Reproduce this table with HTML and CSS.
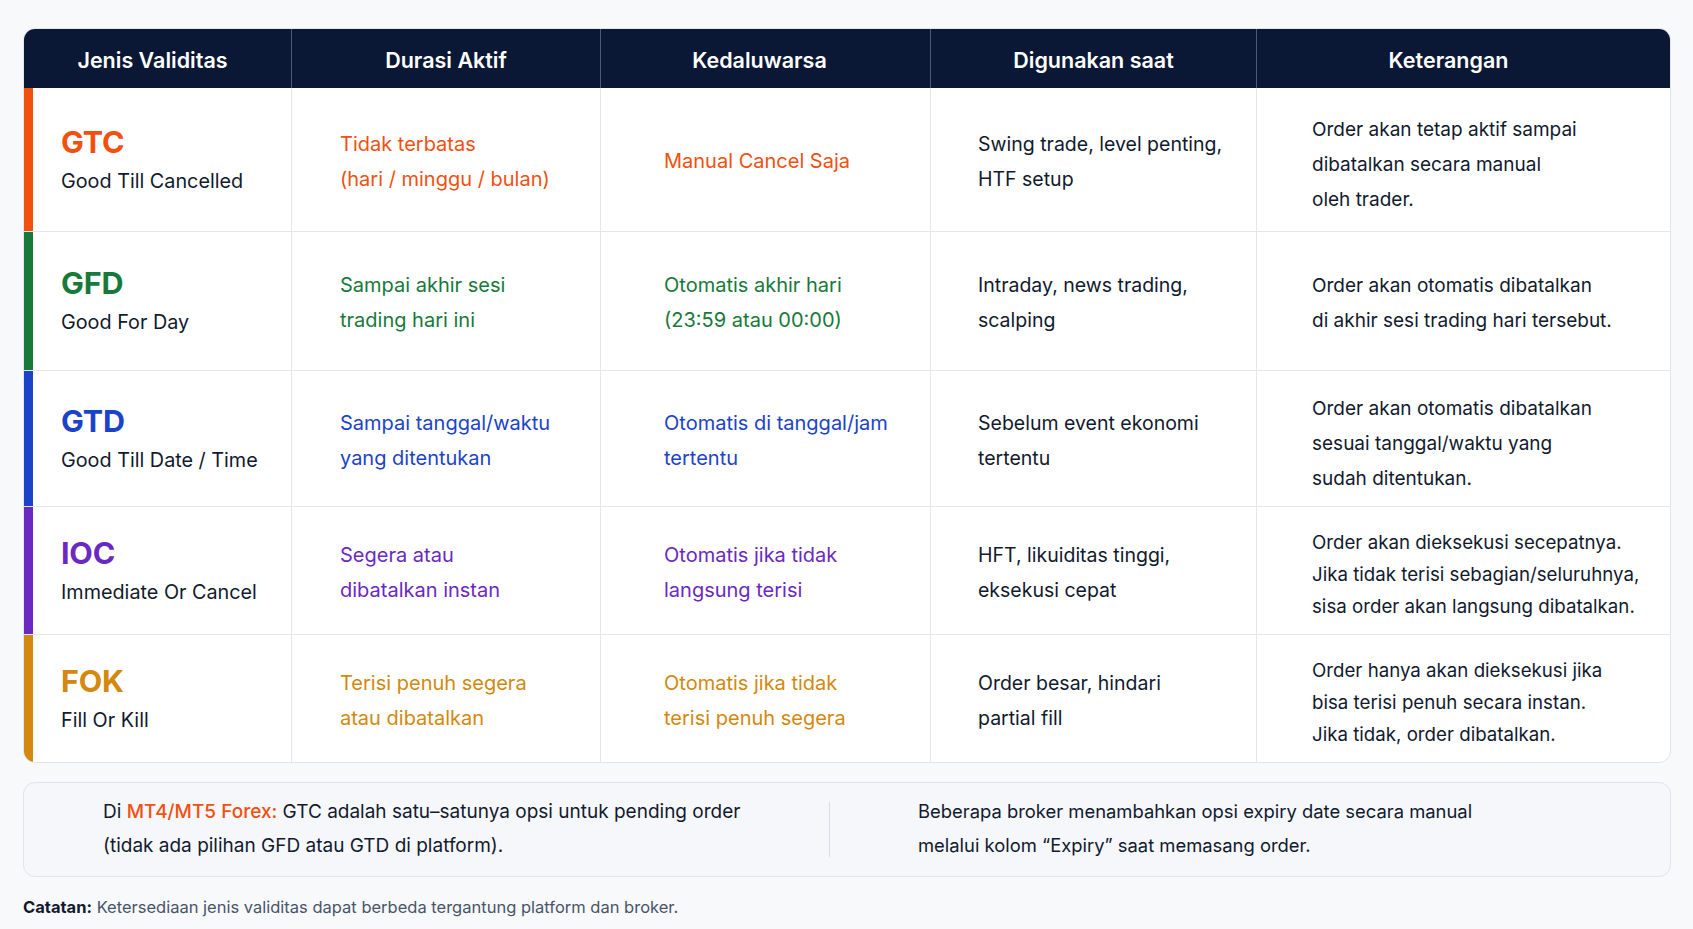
FILE: index.html
```html
<!DOCTYPE html>
<html lang="id">
<head>
<meta charset="utf-8">
<title>Jenis Validitas Order</title>
<link rel="stylesheet" href="styles.css">
</head>
<body>
<div class="page">
  <div class="table">
    <div class="row head">
      <div class="cell h1">Jenis Validitas</div>
      <div class="cell h2">Durasi Aktif</div>
      <div class="cell h3">Kedaluwarsa</div>
      <div class="cell h4">Digunakan saat</div>
      <div class="cell h5">Keterangan</div>
    </div>

    <div class="row r1 gtc">
      <div class="cell c1"><div class="code">GTC</div><div class="name">Good Till Cancelled</div></div>
      <div class="cell c2 tint"><span>Tidak terbatas</span><span>(hari / minggu / bulan)</span></div>
      <div class="cell c3 tint"><span>Manual Cancel Saja</span></div>
      <div class="cell c4"><span>Swing trade, level penting,</span><span>HTF setup</span></div>
      <div class="cell c5"><span>Order akan tetap aktif sampai</span><span>dibatalkan secara manual</span><span>oleh trader.</span></div>
    </div>

    <div class="row r2 gfd">
      <div class="cell c1"><div class="code">GFD</div><div class="name">Good For Day</div></div>
      <div class="cell c2 tint"><span>Sampai akhir sesi</span><span>trading hari ini</span></div>
      <div class="cell c3 tint"><span>Otomatis akhir hari</span><span>(23:59 atau 00:00)</span></div>
      <div class="cell c4"><span>Intraday, news trading,</span><span>scalping</span></div>
      <div class="cell c5 two"><span>Order akan otomatis dibatalkan</span><span>di akhir sesi trading hari tersebut.</span></div>
    </div>

    <div class="row r3 gtd">
      <div class="cell c1"><div class="code">GTD</div><div class="name">Good Till Date / Time</div></div>
      <div class="cell c2 tint"><span>Sampai tanggal/waktu</span><span>yang ditentukan</span></div>
      <div class="cell c3 tint"><span>Otomatis di tanggal/jam</span><span>tertentu</span></div>
      <div class="cell c4"><span>Sebelum event ekonomi</span><span>tertentu</span></div>
      <div class="cell c5"><span>Order akan otomatis dibatalkan</span><span>sesuai tanggal/waktu yang</span><span>sudah ditentukan.</span></div>
    </div>

    <div class="row r4 ioc">
      <div class="cell c1"><div class="code">IOC</div><div class="name">Immediate Or Cancel</div></div>
      <div class="cell c2 tint"><span>Segera atau</span><span>dibatalkan instan</span></div>
      <div class="cell c3 tint"><span>Otomatis jika tidak</span><span>langsung terisi</span></div>
      <div class="cell c4"><span>HFT, likuiditas tinggi,</span><span>eksekusi cepat</span></div>
      <div class="cell c5 tight"><span>Order akan dieksekusi secepatnya.</span><span>Jika tidak terisi sebagian/seluruhnya,</span><span>sisa order akan langsung dibatalkan.</span></div>
    </div>

    <div class="row r5 fok">
      <div class="cell c1"><div class="code">FOK</div><div class="name">Fill Or Kill</div></div>
      <div class="cell c2 tint"><span>Terisi penuh segera</span><span>atau dibatalkan</span></div>
      <div class="cell c3 tint"><span>Otomatis jika tidak</span><span>terisi penuh segera</span></div>
      <div class="cell c4"><span>Order besar, hindari</span><span>partial fill</span></div>
      <div class="cell c5 tight"><span>Order hanya akan dieksekusi jika</span><span>bisa terisi penuh secara instan.</span><span>Jika tidak, order dibatalkan.</span></div>
    </div>
  </div>

  <div class="note">
    <div class="note-left">
      <span>Di <b class="hl">MT4/MT5 Forex:</b> GTC adalah satu–satunya opsi untuk pending order</span>
      <span>(tidak ada pilihan GFD atau GTD di platform).</span>
    </div>
    <div class="note-right">
      <span>Beberapa broker menambahkan opsi expiry date secara manual</span>
      <span>melalui kolom “Expiry” saat memasang order.</span>
    </div>
  </div>

  <p class="caption"><b>Catatan:</b> Ketersediaan jenis validitas dapat berbeda tergantung platform dan broker.</p>
</div>
</body>
</html>
```

FILE: styles.css
```css
* { box-sizing: border-box; }

html, body {
  margin: 0;
  padding: 0;
}

body {
  background: #f8f9fb;
  font-family: Inter, "Noto Sans", "Liberation Sans", sans-serif;
  color: #111a2e;
}

.page {
  padding: 28px 0 0 23px;
  width: 1671px;
}

.table {
  width: 1648px;
  border: 1px solid #e1e4eb;
  border-radius: 12px;
  overflow: hidden;
  background: #ffffff;
}

.row {
  display: grid;
  grid-template-columns: 268px 309px 330px 326px 413px;
  border-bottom: 1px solid #e3e6ed;
}

.row:last-child { border-bottom: none; }

.cell {
  display: flex;
  flex-direction: column;
  justify-content: center;
  border-right: 1px solid #e3e6ed;
  font-size: 20px;
  line-height: 35px;
  padding-top: 4px;
}

.cell:last-child { border-right: none; }

.head {
  background: #0a1836;
  height: 59px;
  border-bottom: none;
}

.head .cell {
  color: #ffffff;
  font-weight: 600;
  font-size: 21.5px;
  text-align: center;
  padding-top: 3px;
  border-right: 1px solid rgba(255, 255, 255, 0.28);
}
.head .cell:last-child { border-right: none; }
.head .h1 { padding-right: 10px; }
.head .h3 { padding-right: 12px; }
.head .h5 { padding-right: 30px; }

.r1 { height: 144px; }
.r2 { height: 139px; }
.r3 { height: 136px; }
.r4 { height: 128px; }
.r5 { height: 127px; }

.c1 {
  border-left: 9px solid var(--accent);
  padding-left: 28px;
}
.c2 { padding-left: 48px; }
.c3 { padding-left: 63px; }
.c4 { padding-left: 47px; font-size: 19.5px; }
.c5 { padding-left: 55px; font-size: 19px; padding-top: 9px; }

.c5.two { padding-top: 3px; }
.c5.tight { line-height: 32px; font-size: 18.7px; }

.code {
  color: var(--accent);
  font-size: 30.5px;
  font-weight: 700;
  line-height: 38px;
  letter-spacing: -0.2px;
}

.name {
  font-size: 19.8px;
  line-height: 40px;
  color: #111a2e;
}

.tint { color: var(--accent); }

.gtc { --accent: #f2500f; }
.gfd { --accent: #17793a; }
.gtd { --accent: #1b43c9; }
.ioc { --accent: #6a29c2; }
.fok { --accent: #d3880e; }

.note {
  margin-top: 19px;
  width: 1648px;
  height: 95px;
  background: #f6f7fa;
  border: 1px solid #e1e4eb;
  border-radius: 12px;
  display: grid;
  grid-template-columns: 805px 1fr;
  align-items: center;
  line-height: 34px;
}

.note-left, .note-right {
  display: flex;
  flex-direction: column;
}

.note-left { padding-left: 79px; font-size: 19px; padding-bottom: 2px; }

.note-right {
  border-left: 1px solid #d9dde5;
  padding-left: 88px;
  padding-bottom: 3px;
  height: 55px;
  justify-content: center;
  font-size: 18.4px;
}

.hl {
  color: #f2500f;
  font-weight: 500;
}

.caption {
  margin: 20px 0 0;
  font-size: 16.5px;
  line-height: 20px;
  color: #475569;
}

.caption b {
  color: #111a2e;
  font-weight: 700;
}
```
